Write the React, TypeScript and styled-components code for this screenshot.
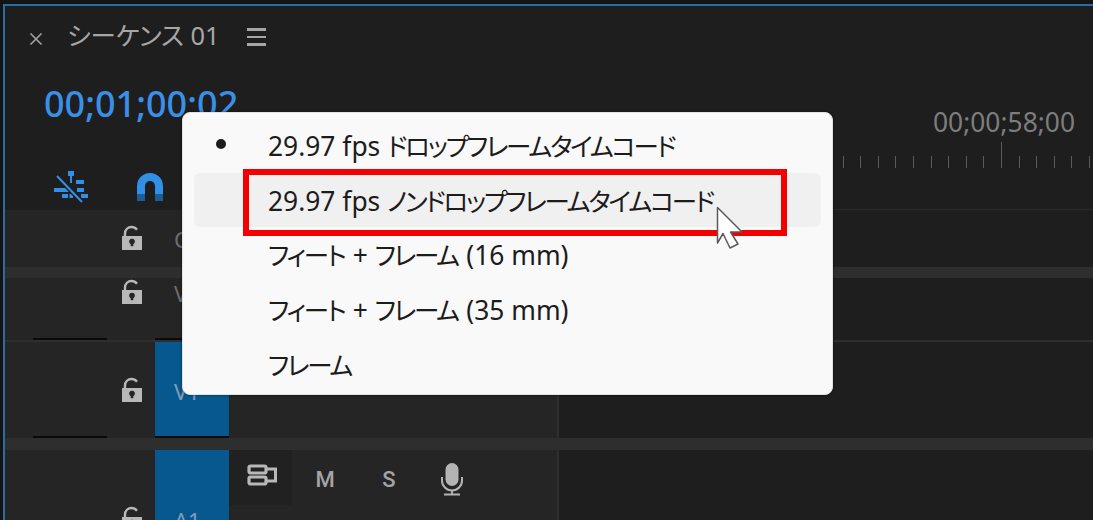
import styled, { createGlobalStyle } from "styled-components";

const UI_FONT = `"Noto Sans", "Noto Sans CJK JP", sans-serif`;

const GlobalStyle = createGlobalStyle`
  * { box-sizing: border-box; }
  html, body { margin: 0; height: 100%; overflow: hidden; background: #141414; }
`;

const menuItems = [
  "29.97 fps ドロップフレームタイムコード",
  "29.97 fps ノンドロップフレームタイムコード",
  "フィート + フレーム (16 mm)",
  "フィート + フレーム (35 mm)",
  "フレーム",
];

const ticks = Array.from({ length: 16 }, (_, i) => i === 10);

function LockIcon() {
  return (
    <svg width="22" height="25" viewBox="0 0 22 25">
      <path d="M4 12V8.5C4 4.5 7 2 10.5 2c2.2 0 4 .9 5.5 2.8" fill="none" stroke="#b8b8b8" strokeWidth="2.4" />
      <path d="M1 11h20v14H1z" fill="#b8b8b8" />
      <circle cx="11" cy="16.5" r="2.8" fill="#262626" />
      <path d="M9.7 17h2.6v4.2H9.7z" fill="#262626" />
    </svg>
  );
}

function LinkIcon() {
  return (
    <svg width="36" height="32" viewBox="0 0 36 32">
      <path d="M15 0h6v5h-6zM17 5h2v7h-2zM23 9h8v4h-8zM1 17h17v4H1zM24 17h7v4h-7zM9 23h6v4H9zM16.5 23H20v4h-3.500zM28 23h7v4h-7z" fill="#3190e6" />
      <path d="M4 5l25 26" stroke="#1e1e1e" strokeWidth="5" />
      <path d="M4 5l25 26" stroke="#3190e6" strokeWidth="2" />
    </svg>
  );
}

function MagnetIcon() {
  return (
    <svg width="28" height="30" viewBox="0 0 28 30">
      <path d="M1 22V14a13 13 0 0 1 26 0v8h-8v-8a5 5 0 0 0-10 0v8z" fill="#3190e6" />
      <path d="M1 22h8v7H1zM19 22h8v7h-8z" fill="#1c5d96" />
    </svg>
  );
}

function TargetIcon() {
  return (
    <svg width="30" height="22" viewBox="0 0 30 22">
      <rect x="2" y="2" width="17" height="7" rx="1.5" fill="none" stroke="#b8b8b8" strokeWidth="3.2" />
      <rect x="2" y="13" width="17" height="7" rx="1.5" fill="none" stroke="#b8b8b8" strokeWidth="3.2" />
      <path d="M19 5h9.500v12H19" fill="none" stroke="#b8b8b8" strokeWidth="3" />
    </svg>
  );
}

function MicIcon() {
  return (
    <svg width="24" height="34" viewBox="0 0 24 34">
      <rect x="5.500" y="1" width="13" height="23" rx="6.500" fill="#b4b4b4" />
      <path d="M2 15v3.500a10 10 0 0 0 20 0V15M12 28v4M4 32.500h16" fill="none" stroke="#b4b4b4" strokeWidth="2" />
    </svg>
  );
}

function Cursor() {
  return (
    <svg width="30" height="46" viewBox="0 0 30 46">
      <path d="M1.500 1.500L26 26H14.500l7.500 12-8 4-7-14.500L1.500 37z" fill="#ffffff" stroke="#5a5a5a" strokeWidth="1.5" strokeLinejoin="round" />
    </svg>
  );
}

export default function App() {
  return (
    <>
      <GlobalStyle />
      <Shell>
        <Panel>
          <Head>
            <HeadLeft>
              <TabRow>
                <CloseIcon viewBox="0 0 14 14">
                  <path d="M1.500 1.500l11 11M12.500 1.500l-11 11" stroke="#a0a0a0" strokeWidth="1.7" />
                </CloseIcon>
                <TabTitle>シーケンス 01</TabTitle>
                <MenuLines>
                  <i />
                  <i />
                  <i />
                </MenuLines>
              </TabRow>
              <TimeCode>00;01;00;02</TimeCode>
              <ToolRow>
                <LinkIcon />
                <MagnetIcon />
              </ToolRow>
            </HeadLeft>
            <Ruler>
              <RulerTime>00;00;58;00</RulerTime>
              <TickRow>
                {ticks.map((major, i) => (
                  <Tick key={i} $major={major} />
                ))}
              </TickRow>
            </Ruler>
          </Head>

          <TrackRow $height={57} $top={15}>
            <Mark />
            <LockSlot>
              <LockIcon />
            </LockSlot>
            <Tag>C1</Tag>
          </TrackRow>
          <Separator $size={11} />
          <TrackRow $height={62} $top={1}>
            <Mark $line />
            <LockSlot>
              <LockIcon />
            </LockSlot>
            <Tag $line>V2</Tag>
          </TrackRow>
          <Separator $size={2} />
          <TrackRow $height={96} $top={35}>
            <Mark $line />
            <LockSlot>
              <LockIcon />
            </LockSlot>
            <Tag $line $on>V1</Tag>
          </TrackRow>
          <Separator $size={12} />
          <TrackRow $height={120} $top={56}>
            <Mark />
            <LockSlot>
              <LockIcon />
            </LockSlot>
            <Tag $on>A1</Tag>
            <TrackButtons>
              <TargetButton>
                <TargetIcon />
              </TargetButton>
              <LetterButton $width={66}>M</LetterButton>
              <LetterButton $width={62}>S</LetterButton>
              <MicSlot>
                <MicIcon />
              </MicSlot>
            </TrackButtons>
          </TrackRow>
        </Panel>

        <Menu>
          {menuItems.map((label, i) => (
            <MenuItem key={label} $hover={i === 1}>
              <Bullet $on={i === 0} />
              <span>
                {label.split(/([\u30a0-\u30ff]+)/).map((part, j) =>
                  j % 2 === 1 ? <Kana key={j}>{part}</Kana> : part
                )}
              </span>
            </MenuItem>
          ))}
        </Menu>
        <RedBox />
        <CursorWrap>
          <Cursor />
        </CursorWrap>
      </Shell>
    </>
  );
}

const Shell = styled.div`
  position: relative;
  width: 100%;
  height: 520px;
  padding: 4px 0 0 3px;
  overflow: hidden;
  background: #141414;
  font-family: ${UI_FONT};
`;

const Panel = styled.div`
  height: 516px;
  border-top: 2px solid #2b6ca5;
  border-left: 2px solid #2b6ca5;
  background: #1e1e1e;
  overflow: hidden;
`;

const Head = styled.div`
  display: flex;
  height: 204px;
`;

const HeadLeft = styled.div`
  width: 552px;
  flex-shrink: 0;
`;

const TabRow = styled.div`
  display: flex;
  align-items: center;
  height: 62px;
  padding-left: 24px;
`;

const CloseIcon = styled.svg`
  width: 14px;
  height: 14px;
  margin-top: 4px;
  margin-right: 24px;
`;

const TabTitle = styled.span`
  width: 151px;
  margin-right: 29px;
  margin-top: -8px;
  font-size: 25.5px;
  color: #a6a6a6;
  white-space: nowrap;
  font-feature-settings: "palt";
`;

const MenuLines = styled.div`
  display: flex;
  flex-direction: column;
  gap: 5px;
  width: 19px;

  i {
    display: block;
    height: 2.5px;
    background: #a6a6a6;
  }
`;

const TimeCode = styled.div`
  height: 62px;
  padding: 12px 0 0 39px;
  font-size: 36px;
  font-weight: 500;
  line-height: 48px;
  color: #3a8fe6;
`;

const ToolRow = styled.div`
  display: flex;
  align-items: center;
  gap: 47px;
  height: 74px;
  padding: 40px 0 0 48px;
`;

const Ruler = styled.div`
  flex: 1;
  display: flex;
  flex-direction: column;
  align-items: flex-end;
  padding-right: 3px;
  border-bottom: 1px solid #2a2a2a;
`;

const RulerTime = styled.div`
  margin-top: 97px;
  margin-right: 15px;
  font-size: 26.4px;
  line-height: 38px;
  color: #7d7d7d;
`;

const TickRow = styled.div`
  display: flex;
  align-items: flex-end;
  gap: 16.6px;
  height: 27px;
`;

const Tick = styled.i<{ $major: boolean }>`
  display: block;
  width: 1px;
  height: ${(p) => (p.$major ? "26px" : "12px")};
  background: #5b5b5b;
`;

const TrackRow = styled.div<{ $height: number; $top: number }>`
  display: flex;
  align-items: flex-start;
  width: 552px;
  height: ${(p) => p.$height}px;
  padding-left: 28px;
  background: #252525;
  box-shadow: 2px 0 0 #2e2e2e;

  > * {
    --top: ${(p) => p.$top}px;
  }
`;

const Separator = styled.div<{ $size: number }>`
  height: ${(p) => p.$size}px;
  background: #2e2e2e;
`;

const Mark = styled.div<{ $line?: boolean }>`
  width: 74px;
  height: 100%;
  border-bottom: 2px solid ${(p) => (p.$line ? "#0a0a0a" : "transparent")};
`;

const LockSlot = styled.div`
  display: flex;
  justify-content: center;
  width: 48px;
  padding: var(--top) 0 0 2px;
`;

const Tag = styled.div<{ $on?: boolean; $line?: boolean }>`
  width: 74px;
  height: 100%;
  padding: var(--top) 0 0 19px;
  font-size: 22px;
  line-height: 28px;
  color: ${(p) => (p.$on ? "#7f9db8" : "#6e6e6e")};
  background: ${(p) => (p.$on ? "#07588f" : "transparent")};
  border-bottom: 2px solid ${(p) => (p.$line ? "#0a0a0a" : "transparent")};
`;

const TrackButtons = styled.div`
  display: flex;
  align-items: center;
  height: 55px;
`;

const TargetButton = styled.div`
  display: flex;
  align-items: center;
  justify-content: center;
  width: 63px;
  height: 55px;
  padding: 0 0 0 3px;
  background: #212121;

  svg {
    margin-bottom: 5px;
  }
`;

const LetterButton = styled.span<{ $width: number }>`
  width: ${(p) => p.$width}px;
  margin-top: 4px;
  font-family: Roboto, sans-serif;
  font-size: 22px;
  font-weight: 500;
  text-align: center;
  color: #a4a4a4;
`;

const MicSlot = styled.div`
  display: flex;
  margin: 2px 0 0 20px;
`;

const Menu = styled.div`
  position: absolute;
  top: 112px;
  left: 182px;
  width: 651px;
  height: 283px;
  padding: 5px 11px;
  background: #f9f9f9;
  border: 1px solid #e2e2e2;
  border-radius: 8px;
  box-shadow: 0 0 3px rgba(0, 0, 0, 0.5);
`;

const MenuItem = styled.div<{ $hover: boolean }>`
  display: flex;
  align-items: center;
  height: 54.6px;
  font-size: 26.4px;
  color: #1c1c1c;
  white-space: nowrap;
  border-radius: 6px;
  background: ${(p) => (p.$hover ? "#f0f0f0" : "transparent")};
`;

const Kana = styled.span`
  margin-right: 1.5px;
  font-size: 25.5px;
  letter-spacing: -2.2px;
  font-feature-settings: "palt";
`;

const Bullet = styled.span<{ $on: boolean }>`
  width: 10px;
  height: 10px;
  margin: -2px 42px 0 22px;
  border-radius: 50%;
  background: ${(p) => (p.$on ? "#1c1c1c" : "transparent")};
`;

const RedBox = styled.div`
  position: absolute;
  top: 169px;
  left: 243px;
  width: 544px;
  height: 67px;
  border: 6px solid #f50000;
`;

const CursorWrap = styled.div`
  position: absolute;
  top: 206px;
  left: 716px;
  display: flex;
`;
